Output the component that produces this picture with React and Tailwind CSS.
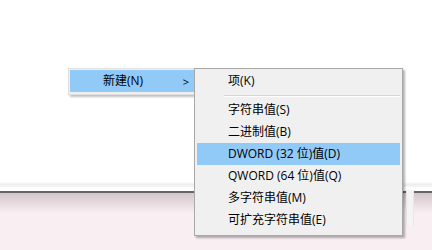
import React from "react";

const font = { fontFamily: '"Open Sans", "Noto Sans CJK SC", sans-serif' };

function Item({ label, active }) {
  return (
    <div
      className={`h-[22px] flex items-center pl-[31px] text-[12px] text-black ${
        active ? "bg-[#91c9f7]" : ""
      }`}
    >
      {label}
    </div>
  );
}

export default function App() {
  return (
    <div className="relative w-[432px] h-[250px] overflow-hidden bg-white" style={font}>
      {/* background window */}
      <div className="flex flex-col h-full">
        <div className="h-[182px] bg-white" />
        <div className="h-[5px] bg-gradient-to-b from-[#ffffff] via-[#eeeeee] to-[#f6f6f6]" />
        <div className="h-[4px] bg-white" />
        <div className="h-[2px] bg-[#666666]" />
        <div className="h-[20px] bg-gradient-to-b from-[#d3c7cc] to-[#f9eef2]" />
        <div className="flex-1 bg-[#f9eef2]" />
      </div>

      {/* faint stripe right of submenu */}
      <div className="absolute left-[406px] top-[190px] w-[8px] h-[36px] bg-[#f6f3f5] border-x border-[#ebe7e9]" />

      {/* parent menu */}
      <div className="absolute left-[68px] top-[68px] w-[128px] h-[27px] bg-[#f0f0f0] border border-[#e0e0e0] shadow-[2px_2px_2px_rgba(0,0,0,0.25)]">
        <div className="m-[1px] h-[22px] bg-[#91c9f7] flex items-center text-[12px] text-black">
          <span className="ml-[33px]">新建(N)</span>
          <span className="ml-auto mr-[5px] text-[11px] leading-none">&gt;</span>
        </div>
      </div>

      {/* submenu */}
      <div className="absolute left-[194px] top-[68px] w-[209px] h-[168px] bg-[#f0f0f0] border border-[#a8a8a8] shadow-[2px_2px_2px_rgba(0,0,0,0.3)] pt-[1px] px-[2px]">
        <Item label="项(K)" />
        <div className="h-[7px] flex flex-col justify-center pl-[27px]">
          <div className="h-px bg-[#d7d7d7]" />
          <div className="h-px bg-white" />
        </div>
        <Item label="字符串值(S)" />
        <Item label="二进制值(B)" />
        <Item label="DWORD (32 位)值(D)" active />
        <Item label="QWORD (64 位)值(Q)" />
        <Item label="多字符串值(M)" />
        <Item label="可扩充字符串值(E)" />
      </div>
    </div>
  );
}
